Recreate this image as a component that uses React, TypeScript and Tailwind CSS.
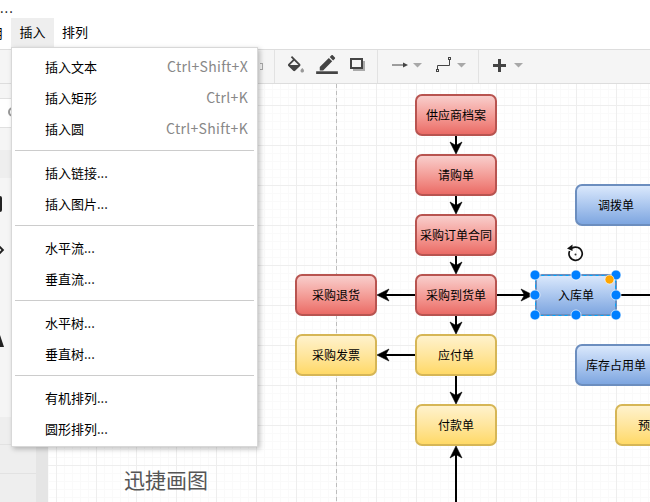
const menuGroups = [
  [
    { label: "插入文本", keys: "Ctrl+Shift+X" },
    { label: "插入矩形", keys: "Ctrl+K" },
    { label: "插入圆", keys: "Ctrl+Shift+K" },
  ],
  [{ label: "插入链接..." }, { label: "插入图片..." }],
  [{ label: "水平流..." }, { label: "垂直流..." }],
  [{ label: "水平树..." }, { label: "垂直树..." }],
  [{ label: "有机排列..." }, { label: "圆形排列..." }],
];

const red = "border-[#b85450] bg-gradient-to-b from-[#f8cecc] to-[#ea6b66]";
const blue = "border-[#6c8ebf] bg-gradient-to-b from-[#dae8fc] to-[#7ea6e0]";
const yellow = "border-[#d6b656] bg-gradient-to-b from-[#fff2cc] to-[#ffd966]";

const nodes = [
  { text: "供应商档案", pos: "left-[367px] top-[10px]", color: red },
  { text: "请购单", pos: "left-[367px] top-[70px]", color: red },
  { text: "采购订单合同", pos: "left-[367px] top-[130px]", color: red },
  { text: "采购到货单", pos: "left-[367px] top-[190px]", color: red },
  { text: "采购退货", pos: "left-[247px] top-[190px]", color: red },
  { text: "应付单", pos: "left-[367px] top-[250px]", color: yellow },
  { text: "采购发票", pos: "left-[247px] top-[250px]", color: yellow },
  { text: "付款单", pos: "left-[367px] top-[320px]", color: yellow },
  { text: "调拨单", pos: "left-[527px] top-[100px]", color: blue },
  { text: "入库单", pos: "left-[487px] top-[190px]", color: blue },
  { text: "库存占用单", pos: "left-[527px] top-[260px]", color: blue },
  { text: "预付单", pos: "left-[567px] top-[320px]", color: yellow },
];

const Caret = () => (
  <svg width="9" height="6" viewBox="0 0 9 6" className="shrink-0">
    <path d="M0 1h9L4.5 5.5z" fill="#a8a8a8" />
  </svg>
);

const ArrowHead = ({ x, y, dir }: { x: number; y: number; dir: number }) => (
  <path d="M0 0L-12 -6L-8.5 0L-12 6Z" transform={`translate(${x} ${y}) rotate(${dir})`} fill="#000" stroke="#000" strokeWidth="0.6" />
);

const Edges = () => (
  <svg width="602" height="418" viewBox="48 84 602 418" className="absolute left-0 top-0">
    <line x1="336.5" y1="84" x2="336.5" y2="502" stroke="#bdbdbd" strokeDasharray="4 3" />
    <g stroke="#000" strokeWidth="2">
      <line x1="456" y1="135" x2="456" y2="148" />
      <line x1="456" y1="195" x2="456" y2="208" />
      <line x1="456" y1="255" x2="456" y2="268" />
      <line x1="456" y1="315" x2="456" y2="328" />
      <line x1="456" y1="375" x2="456" y2="398" />
      <line x1="456" y1="452" x2="456" y2="502" />
      <line x1="416" y1="295" x2="384" y2="295" />
      <line x1="416" y1="355" x2="384" y2="355" />
      <line x1="497" y1="295" x2="526" y2="295" />
      <line x1="616" y1="295" x2="650" y2="295" />
    </g>
    <ArrowHead x={456} y={154} dir={90} />
    <ArrowHead x={456} y={214} dir={90} />
    <ArrowHead x={456} y={274} dir={90} />
    <ArrowHead x={456} y={334} dir={90} />
    <ArrowHead x={456} y={404} dir={90} />
    <ArrowHead x={456} y={446} dir={-90} />
    <ArrowHead x={377} y={295} dir={180} />
    <ArrowHead x={377} y={355} dir={180} />
    <ArrowHead x={533} y={295} dir={0} />
  </svg>
);

const Selection = () => (
  <svg width="602" height="418" viewBox="48 84 602 418" className="absolute left-0 top-0">
    <rect x="535.5" y="275.5" width="80" height="40" fill="none" stroke="#00a8ff" strokeDasharray="3 3" />
    {[
      [535, 275],
      [576, 275],
      [616, 275],
      [535, 295],
      [616, 295],
      [535, 315],
      [576, 315],
      [616, 315],
    ].map(([x, y]) => (
      <circle key={`${x}-${y}`} cx={x} cy={y} r="5" fill="#007fff" stroke="#fff" strokeOpacity="0.7" />
    ))}
    <circle cx="609.5" cy="279.5" r="4.5" fill="#ffa500" stroke="#fff" strokeOpacity="0.6" />
    <path d="M572 248.2A6.6 6.6 0 1 1 569.6 251" fill="none" stroke="#111" strokeWidth="1.7" />
    <path d="M572.5 244.5L572.5 251L567 248.5Z" fill="#111" />
    <circle cx="575.5" cy="254.5" r="1" fill="#333" />
  </svg>
);

const App = () => {
  return (
    <div className="relative flex h-[502px] w-[650px] flex-col overflow-hidden bg-white font-['Noto_Sans_CJK_SC',sans-serif] text-black">
      {/* menu bar */}
      <div className="relative h-[49px] shrink-0 bg-white">
        <div className="absolute left-0 top-px text-[13px] leading-[14px] tracking-[1px]">...</div>
        <div className="flex h-[29px] translate-y-[18px] items-center text-[13px]">
          <span className="ml-[-10px] w-[13px] overflow-hidden whitespace-nowrap">用</span>
          <span className="ml-[8px] flex h-[29px] w-[43px] items-center justify-center bg-[#eeeeee] pb-px">插入</span>
          <span className="ml-[8px] pb-px">排列</span>
        </div>
      </div>

      {/* toolbar */}
      <div className="flex h-[35px] shrink-0 items-center border-y border-[#dddddd] bg-[#f5f5f5]">
        <div className="flex h-full w-[275px] shrink-0 items-center justify-end border-r border-[#e2e2e2] pr-[11px]">
          <span className="h-[7px] w-[3px] border border-l-0 border-[#aaaaaa]" />
        </div>
        <div className="flex h-full w-[103px] shrink-0 items-center border-r border-[#e2e2e2] pb-[4px] pl-[10px]">
          <svg width="22" height="17" viewBox="0 0 24 19" fill="#444">
            <path d="M16.56 8.94L7.62 0 6.21 1.41l2.38 2.38-5.15 5.15c-.59.59-.59 1.54 0 2.12l5.5 5.5c.29.29.68.44 1.06.44s.77-.15 1.06-.44l5.5-5.5c.59-.58.59-1.53 0-2.12zM5.21 10L10 5.21 14.79 10H5.21z" />
            <path d="M4 10h12l-6 6.5z" />
            <path d="M19 13.5s-2 1.8-2 3c0 1.1.9 2 2 2s2-.9 2-2c0-1.2-2-3-2-3z" fill="#999" />
          </svg>
          <svg width="22" height="19" viewBox="0 0 24 21" fill="#444" className="ml-[9px]">
            <path d="M17.75 7L14 3.25l-10 10V17h3.75l10-10zm2.96-2.96c.39-.39.39-1.02 0-1.41L18.37.29c-.39-.39-1.02-.39-1.41 0L15 2.25 18.75 6l1.96-1.96z" />
            <rect x="0" y="18" width="24" height="3" />
          </svg>
          <svg width="15" height="13" viewBox="0 0 15 13" className="ml-[12px]">
            <rect x="3" y="3" width="12" height="10" fill="#aaaaaa" />
            <rect x="1" y="1" width="11" height="9" fill="#f5f5f5" stroke="#444" strokeWidth="2" />
          </svg>
        </div>
        <div className="flex h-full w-[101px] shrink-0 items-center border-r border-[#e2e2e2] pb-[3px] pl-[14px]">
          <svg width="16" height="8" viewBox="0 0 16 8">
            <path d="M0 4h13" stroke="#444" strokeWidth="1" />
            <path d="M16 4L11 1.5v5z" fill="#444" />
          </svg>
          <span className="ml-[5px]"><Caret /></span>
          <svg width="16" height="16" viewBox="0 0 16 16" className="ml-[14px]" fill="none" stroke="#444">
            <rect x="0.5" y="12.5" width="2" height="2" />
            <path d="M1.5 12.5V8.5H13.5V3" />
            <rect x="12.5" y="0.5" width="2" height="2" />
          </svg>
          <span className="ml-[5px]"><Caret /></span>
        </div>
        <div className="flex h-full items-center pb-[3px] pl-[14px]">
          <svg width="13" height="13" viewBox="0 0 13 13" fill="#444">
            <path d="M5 0h3v5h5v3H8v5H5V8H0V5h5z" />
          </svg>
          <span className="ml-[8px]"><Caret /></span>
        </div>
      </div>

      <div className="flex min-h-0 flex-1">
        {/* left shape panel, mostly behind the menu */}
        <div className="relative flex w-[36px] shrink-0 flex-col bg-[#f5f5f5]">
          <div className="h-[15px] border-b border-[#e0e0e0]" />
          <div className="relative h-[29px] border-b border-[#e0e0e0] bg-white">
            <span className="absolute left-[8px] top-[8px] h-[10px] w-[10px] rounded-full border-2 border-[#999999]" />
          </div>
          <div className="h-[22px]" />
          <div className="h-[28px] bg-[#eeeeee]" />
          <div className="relative flex-1">
            <span className="absolute left-[-8px] top-[18px] h-[16px] w-[10px] rounded-[2px] border-2 border-[#222222]" />
            <span className="absolute left-[-3px] top-[69px] h-[6px] w-[6px] rotate-45 border-2 border-[#222222]" />
            <span className="absolute left-0 top-[157px] h-0 w-0 border-b-[12px] border-r-[4px] border-b-[#222222] border-r-transparent" />
          </div>
          <div className="h-[28px] border-b border-[#e2e2e2] bg-[#eeeeee]" />
          <div className="h-[29px] border-b border-[#e2e2e2] bg-[#eeeeee]" />
          <div className="h-[28px] bg-[#eeeeee]" />
        </div>
        <div className="w-[12px] shrink-0 bg-[#e5e5e5]" />

        {/* canvas */}
        <div className="relative min-w-0 flex-1 overflow-hidden bg-white bg-[image:linear-gradient(to_right,#eeeeee_1px,transparent_1px),linear-gradient(to_bottom,#eeeeee_1px,transparent_1px),linear-gradient(to_right,#fafafa_1px,transparent_1px),linear-gradient(to_bottom,#fafafa_1px,transparent_1px)] bg-[size:40px_40px,40px_40px,8px_8px,8px_8px] bg-[position:8px_21px,8px_21px,0px_5px,0px_5px]">
          <Edges />
          {nodes.map((node) => (
            <div
              key={node.text}
              className={`absolute flex h-[42px] w-[82px] items-center justify-center overflow-hidden whitespace-nowrap rounded-[7px] border-2 text-[12px] ${node.pos} ${node.color}`}
            >
              {node.text}
            </div>
          ))}
          <Selection />
          <div className="absolute left-[76px] top-[381px] text-[21px] leading-[28px] text-[#555555]">迅捷画图</div>
        </div>
      </div>

      {/* open insert menu */}
      <div className="absolute left-[11px] top-[47px] w-[247px] border border-[#d8d8d8] bg-white pb-[2px] pt-[3px] text-[13px] shadow-[2px_2px_5px_rgba(0,0,0,0.25)]">
        {menuGroups.map((group, i) => (
          <div key={i}>
            {i > 0 && <div className="mx-[3px] mb-[6px] mt-[6px] h-px bg-[#cccccc]" />}
            {group.map((item) => (
              <div key={item.label} className="flex h-[31px] items-center justify-between pl-[33px] pr-[9px]">
                <span>{item.label}</span>
                {item.keys && <span className="text-[14px] tracking-[0.3px] text-[#888888]">{item.keys}</span>}
              </div>
            ))}
          </div>
        ))}
      </div>
    </div>
  );
};

export default App;
